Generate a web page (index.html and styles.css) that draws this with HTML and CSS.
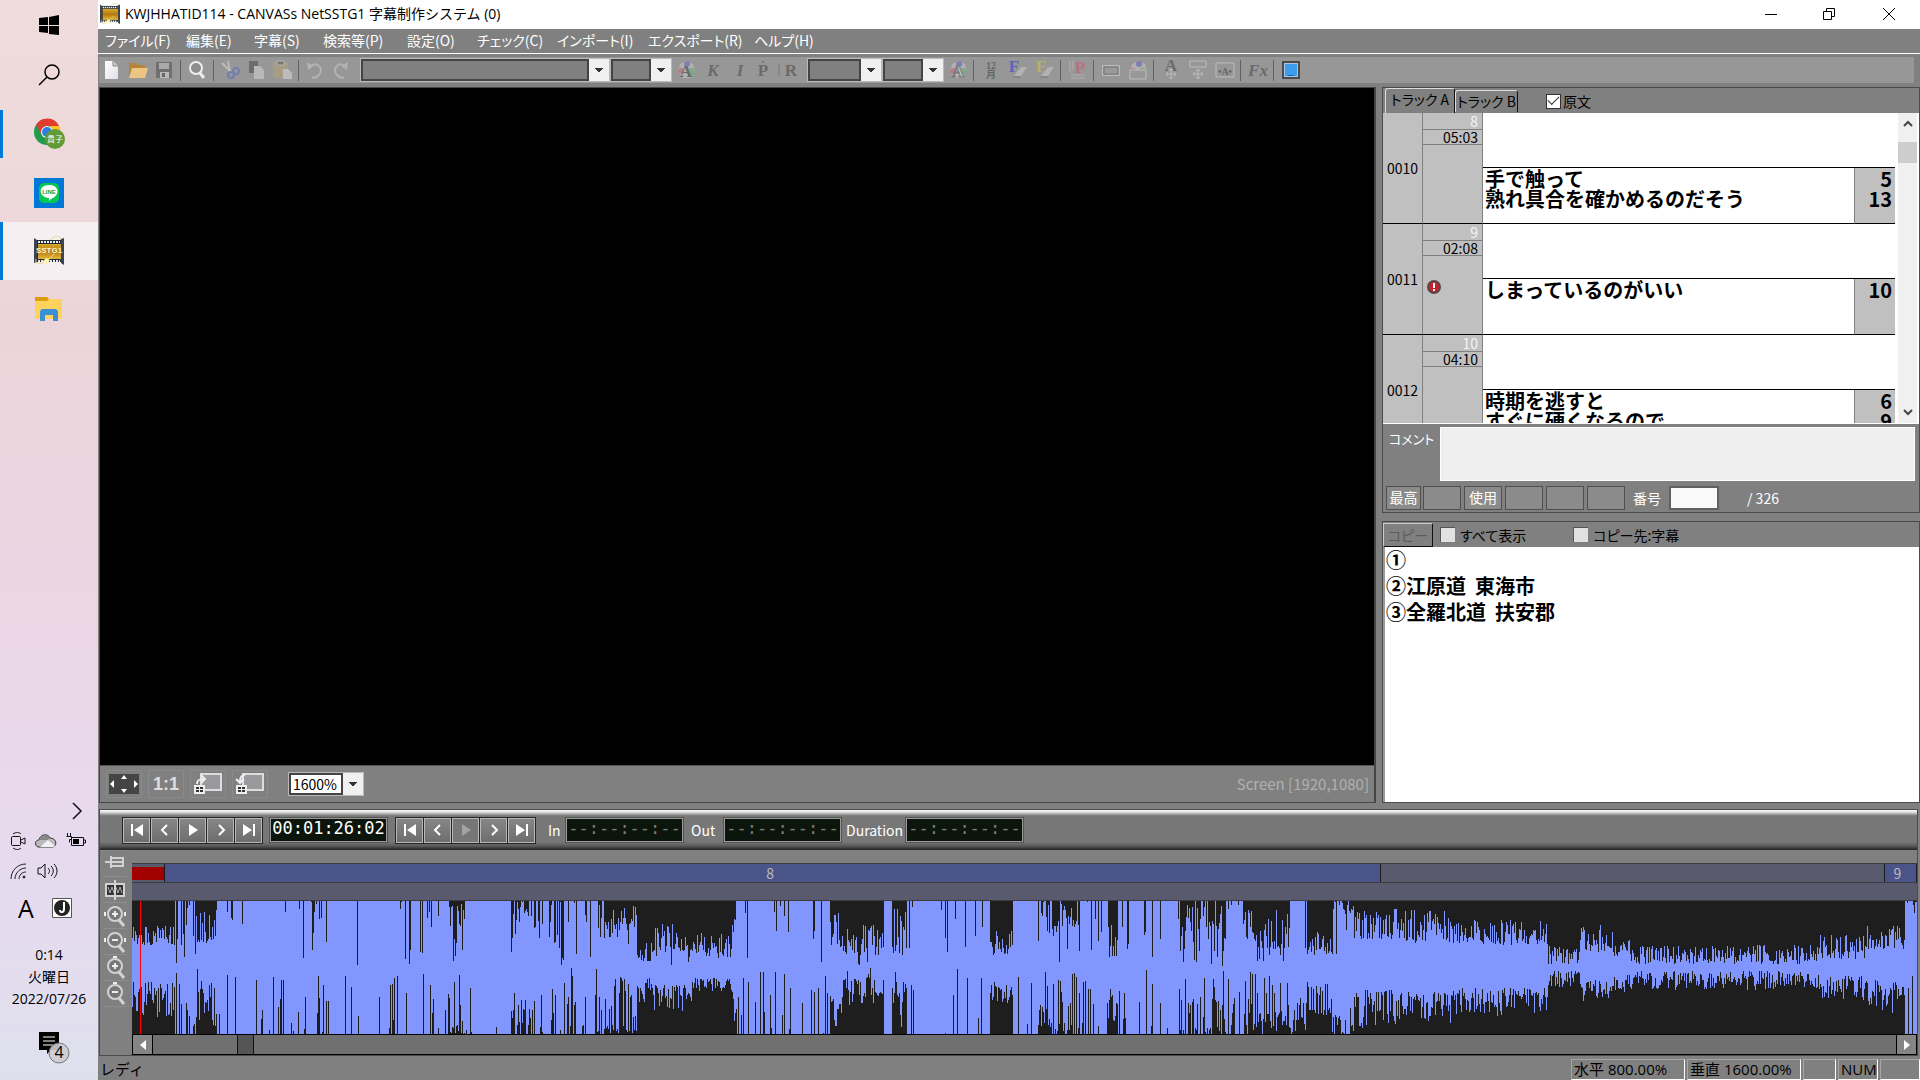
FILE: index.html
```html
<!DOCTYPE html>
<html lang="ja">
<head>
<meta charset="utf-8">
<title>KWJHHATID114 - CANVASs NetSSTG1 字幕制作システム (0)</title>
<link rel="stylesheet" href="styles.css">
</head>
<body>
<svg class="defs" width="0" height="0" aria-hidden="true">
  <defs>
    <linearGradient id="gold" x1="0" y1="0" x2="0" y2="1"><stop offset="0" stop-color="#d9a92b"/><stop offset=".5" stop-color="#b57a10"/><stop offset="1" stop-color="#e6b93c"/></linearGradient>
    <linearGradient id="paper" x1="0" y1="0" x2="1" y2="1"><stop offset="0" stop-color="#fff"/><stop offset="1" stop-color="#dde1e6"/></linearGradient>
    <symbol id="film" viewBox="0 0 30 30">
      <path d="M0 2l3 2v22l-3 1zM27 3l3-1v27l-3-2z" fill="#3b4450"/>
      <path d="M3 4h24v22H3z" fill="#222a35"/>
      <path d="M4 6h22M4 25h22" stroke="#e8edf2" stroke-width="2" stroke-dasharray="2 1"/>
      <path d="M4 8h23v15H4z" fill="url(#gold)"/>
      <path d="M2 23c-2 8 8 4 11 2l7-7M16 4c4-5 12-5 10 0" fill="none" stroke="#ead98c" stroke-width="1"/>
      <path d="M8 26l4-4 4 2-3 4z" fill="#fbf6a8"/>
    </symbol>
    <symbol id="prev" viewBox="0 0 20 20"><path d="M4 4h2v12H4zM16 4v12L7 10z"/></symbol>
    <symbol id="back" viewBox="0 0 20 20"><path d="M12 5l-5 5 5 5" fill="none" stroke="#fff" stroke-width="2"/></symbol>
    <symbol id="play" viewBox="0 0 20 20"><path d="M6 4l9 6-9 6z"/></symbol>
    <symbol id="fwd" viewBox="0 0 20 20"><path d="M8 5l5 5-5 5" fill="none" stroke="#fff" stroke-width="2"/></symbol>
    <symbol id="next" viewBox="0 0 20 20"><path d="M14 4h2v12h-2zM4 4v12l9-6z"/></symbol>
    <symbol id="palette" viewBox="0 0 20 20">
      <path d="M10 1l7 3 2 7-4 7H6l-4-6 2-8z" fill="#b0b0b0"/>
      <circle cx="11" cy="4" r="3" fill="#7b80b0"/><circle cx="15" cy="12" r="4" fill="#7fa88b"/><circle cx="5" cy="11" r="3" fill="#b28089"/>
    </symbol>
    <symbol id="eraser" viewBox="0 0 20 20"><path d="M6 16l7-9h6l-6 9z" fill="#b2b2b2"/><path d="M6 16h7v2H5z" fill="#888"/></symbol>
    <symbol id="move" viewBox="0 0 20 20"><path d="M10 9v10M5 14h10M8 11l2-2 2 2M8 17l2 2 2-2M7 12l-2 2 2 2M13 12l2 2-2 2" fill="none" stroke="#bcbcbc" stroke-width="1"/></symbol>
    <symbol id="lens" viewBox="0 0 24 24"><circle cx="12" cy="10" r="7" fill="#777" stroke="#d2d2d2" stroke-width="2"/><path d="M16 16l5 6" stroke="#d2d2d2" stroke-width="3"/></symbol>
  </defs>
</svg>

<div class="desktop">
  <nav class="taskbar" aria-label="タスクバー">
    <button class="task" aria-label="スタート"><svg width="20" height="20" viewBox="0 0 20 20"><path d="M0 3l9-1v8H0zM10 2l10-2v10H10zM0 11h9v7l-9-1zM10 11h10v9l-10-1z"/></svg></button>
    <button class="task" aria-label="検索"><svg width="22" height="22" viewBox="0 0 22 22" fill="none" stroke="#000" stroke-width="1.500"><circle cx="14" cy="8" r="7"/><path d="M9 13l-8 8"/></svg></button>
    <button class="task running" aria-label="Chrome"><svg width="32" height="32" viewBox="0 0 32 32">
      <circle cx="14" cy="14" r="13" fill="#1f9d4d"/><path d="M3 7a13 13 0 0 1 23 1H14z" fill="#e33b2e"/><path d="M3 7l6 10 5-9z" fill="#e33b2e"/><path d="M26 8a13 13 0 0 1-10 19l5-12-4-7z" fill="#fcc31e"/><circle cx="14" cy="14" r="6" fill="#fff"/><circle cx="14" cy="14" r="5" fill="#2f7de1"/>
      <circle cx="22" cy="21" r="10" fill="#629a35"/><text x="22" y="24" class="badge-text">貴子</text></svg></button>
    <button class="task" aria-label="LINE"><svg width="30" height="30" viewBox="0 0 30 30"><path d="M0 0h30v30H0z" fill="#0078d7"/><rect x="5" y="5" width="20" height="20" rx="5" fill="#06c755"/><path d="M15 7c11 0 11 11 2 14l-2 2v-3C4 19 4 7 15 7z" fill="#fff"/><text x="15" y="16" class="line-text">LINE</text></svg></button>
    <button class="task running active" aria-label="SSTG1"><svg width="30" height="30" viewBox="0 0 30 30"><use href="#film"/><text x="15" y="17" class="sst-text">SSTG1</text></svg></button>
    <button class="task" aria-label="エクスプローラー"><svg width="28" height="24" viewBox="0 0 28 24"><path d="M0 0h12l2 2v4H0z" fill="#dd9c0b"/><path d="M0 4h12l2-2h13v20H0z" fill="#ffd25e"/><path d="M5 24V14l2-2h14l2 2v10h-5v-6h-8v6z" fill="#3b8fd6"/></svg></button>
    <div class="tray">
      <button class="chevron" aria-label="隠れているインジケーター"><svg width="12" height="18" viewBox="0 0 12 18"><path d="M2 1l8 8-8 8" fill="none" stroke="#111" stroke-width="1.500"/></svg></button>
      <div class="tray-row">
        <svg width="16" height="20" viewBox="0 0 16 20" fill="none" stroke="#111"><rect x="1.500" y="5.500" width="9" height="9" rx="1"/><path d="M11 9l4-2v6l-4-2M3 3c3-2 6-2 8 0M3 17c3 2 6 2 8 0"/></svg>
        <svg width="22" height="16" viewBox="0 0 22 16"><path d="M3 14c-4-2-3-7 1-7 1-6 9-7 11-2 6 0 8 7 3 9z" fill="#bbb" stroke="#333"/><path d="M5 14l8-7 7 6-2 1z" fill="#f1f1f1"/><path d="M4 7c2-5 8-6 11-2l-2 2z" fill="#888"/></svg>
        <svg width="21" height="16" viewBox="0 0 21 16"><path d="M5.500 4.500h12v8h-12zM18 7h1.500v3H18" fill="none" stroke="#111"/><path d="M7 6h6v5H7z"/><path d="M1.500 0v3M4.500 0v3M.5 3.500h5v3h-2v3" fill="none" stroke="#111"/></svg>
      </div>
      <div class="tray-row second">
        <svg width="18" height="18" viewBox="0 0 18 18" fill="none" stroke="#222"><path d="M1 17C1 9 7 2 16 2M5 17c0-6 5-11 11-11M9 17c0-4 3-7 7-7"/><circle cx="14" cy="15" r="1" fill="#111"/></svg>
        <svg width="22" height="18" viewBox="0 0 22 18" fill="none" stroke="#111"><path d="M1 6h3l4-4v14l-4-4H1zM11 6c2 2 2 4 0 6M14 4c3 3 3 7 0 10M17 2c4 4 4 10 0 14"/></svg>
      </div>
      <div class="tray-row ime"><span>A</span>
        <svg width="20" height="20" viewBox="0 0 20 20"><path d="M.5.500h19v19H.5z" fill="#fff" stroke="#555"/><circle cx="10" cy="10" r="8" fill="#222"/><path d="M12 4v7c0 4-4 4-4 1" fill="none" stroke="#fff" stroke-width="2"/></svg>
      </div>
      <div class="clock"><span>0:14</span><span>火曜日</span><span>2022/07/26</span></div>
      <button class="notice" aria-label="通知"><svg width="32" height="34" viewBox="0 0 32 34"><path d="M1 1h20v18H13l-4 4v-4H1z"/><path d="M5 6h12M5 10h12M5 14h10" stroke="#fff"/><circle cx="21" cy="22" r="10" fill="#ccccd2" fill-opacity=".9" stroke="#777"/><text x="21" y="27" class="notice-text">4</text></svg></button>
    </div>
  </nav>

  <div class="app">
    <header class="titlebar">
      <svg width="20" height="22" viewBox="0 0 30 30" preserveAspectRatio="none"><use href="#film"/></svg>
      <h1>KWJHHATID114 - CANVASs NetSSTG1 字幕制作システム (0)</h1>
      <div class="window-buttons">
        <button aria-label="最小化"><svg width="14" height="14"><path d="M1 7.500h12" stroke="#000"/></svg></button>
        <button aria-label="元に戻す"><svg width="14" height="14" fill="none" stroke="#000"><path d="M1.500 4.500h8v8h-8zM4.500 4V1.500h8v8H10"/></svg></button>
        <button aria-label="閉じる"><svg width="14" height="14"><path d="M1 1l12 12M13 1L1 13" stroke="#000"/></svg></button>
      </div>
    </header>

    <nav class="menubar">
      <a href="#">ファイル(F)</a><a href="#">編集(E)</a><a href="#">字幕(S)</a><a href="#">検索等(P)</a><a href="#">設定(O)</a><a href="#">チェック(C)</a><a href="#">インポート(I)</a><a href="#">エクスポート(R)</a><a href="#">ヘルプ(H)</a>
    </nav>

    <div class="toolbar">
      <div class="group main-group">
      <button aria-label="新規"><svg width="20" height="20"><path d="M3 1h8l5 5v13H3z" fill="url(#paper)"/><path d="M11 1v5h5" fill="#ccc" stroke="#888"/></svg></button>
      <button aria-label="開く"><svg width="20" height="20"><path d="M1 3h7l2 2h7v12H1z" fill="#b58439"/><path d="M4 8h16l-3 10H1z" fill="#ecc583"/></svg></button>
      <button disabled aria-label="保存"><svg width="20" height="20"><path d="M2 2h16v16H2z" fill="#707070"/><path d="M5 3h10v6H5z" fill="#aaa"/><path d="M6 12h9v6H6z" fill="#b9b9b9"/><path d="M8 13h3v4H8z" fill="#666"/></svg></button>
      <i class="sep"></i>
      <button aria-label="検索"><svg width="20" height="20"><circle cx="9" cy="8" r="6" fill="#8d8d8d" stroke="#eee" stroke-width="2"/><path d="M13 13l4 5" stroke="#eee" stroke-width="3"/></svg></button>
      <i class="sep"></i>
      <button disabled aria-label="切り取り"><svg width="20" height="20" fill="none"><path d="M2 3l10 10M8 1l2 11" stroke="#bbb" stroke-width="2"/><circle cx="11" cy="15" r="3" stroke="#737fae" stroke-width="2"/><circle cx="16" cy="11" r="3" stroke="#737fae" stroke-width="2"/></svg></button>
      <button disabled aria-label="コピー"><svg width="20" height="20"><path d="M3 1h9v12H3z" fill="#6c6c6c"/><path d="M8 6h6l4 4v9H8z" fill="#b8b8b8"/></svg></button>
      <button disabled aria-label="貼り付け"><svg width="20" height="20"><path d="M1 2h15v16H1z" fill="#a79d83"/><path d="M5 1h7v4H5z" fill="#777" stroke="#b5b5b5"/><path d="M11 9h5l4 4v6h-9z" fill="#bcbcbc"/></svg></button>
      <i class="sep"></i>
      <button disabled aria-label="元に戻す"><svg width="20" height="20" fill="none"><path d="M5 6c8-5 14 3 9 9-2 2-4 3-7 3" stroke="#b2b2b2" stroke-width="2"/><path d="M2 2l1 8 6-4z" fill="#b2b2b2"/></svg></button>
      <button disabled aria-label="やり直し"><svg width="20" height="20" fill="none"><path d="M14 6C7 1 1 9 6 15c2 2 4 3 7 3" stroke="#b2b2b2" stroke-width="2"/><path d="M17 2l-1 8-6-4z" fill="#b2b2b2"/></svg></button>
      </div>
      <div class="group">
      <span class="combo dark wide"><select aria-label="フォント"><option></option></select></span>
      <span class="combo dark"><select aria-label="サイズ"><option></option></select></span>
      <button disabled aria-label="文字色"><svg width="20" height="20"><use href="#palette"/><text x="10" y="17" class="ic dark-ic">A</text></svg></button>
      <button disabled aria-label="太字"><svg width="20" height="20"><text x="10" y="16" class="ic dark-ic it">K</text></svg></button>
      <button disabled aria-label="斜体"><svg width="20" height="20"><text x="10" y="16" class="ic dark-ic it">I</text></svg></button>
      <button disabled aria-label="傍点"><svg width="20" height="20"><text x="6" y="16" class="ic dark-ic">P</text><circle cx="6" cy="2" r="1" fill="#6d6d6d"/></svg></button>
      <button disabled aria-label="ルビ"><svg width="20" height="20"><text x="7" y="16" class="ic dark-ic">R</text><path d="M-5 4v12" stroke="#777"/></svg></button>
      <span class="combo dark mid"><select aria-label="位置"><option></option></select></span>
      <span class="combo dark"><select aria-label="揃え"><option></option></select></span>
      <button disabled aria-label="縁色"><svg width="20" height="20"><use href="#palette"/><text x="10" y="17" class="ic light-ic">A</text></svg></button>
      <i class="sep"></i>
      <button disabled aria-label="縦中横"><svg width="20" height="20"><text x="10" y="9" class="tiny">12</text><text x="10" y="18" class="tiny">月</text></svg></button>
      <button disabled aria-label="書式クリア"><svg width="20" height="20"><use href="#eraser"/><text x="6" y="12" class="ic blue-ic">F</text></svg></button>
      <button disabled aria-label="書式削除"><svg width="20" height="20"><use href="#eraser"/><text x="6" y="12" class="ic yellow-ic">F</text></svg></button>
      <i class="sep"></i>
      <button disabled aria-label="段落"><svg width="20" height="20"><path d="M2 1v11M5 1v9M3 15h14M3 18h14" stroke="#b0b0b0"/><text x="12" y="13" class="ic red-ic">P</text></svg></button>
      <i class="sep"></i>
      <button disabled aria-label="枠"><svg width="20" height="20"><path d="M1.500 5.500h17v10h-17z" fill="#999" stroke="#bcbcbc"/><path d="M3 7h14v7H3z" fill="none" stroke="#777"/></svg></button>
      <button disabled aria-label="枠色"><svg width="20" height="20"><use href="#palette"/><path d="M2 10h16v9H2z" fill="#999" stroke="#bcbcbc"/></svg></button>
      <i class="sep"></i>
      <button disabled aria-label="文字移動"><svg width="20" height="20"><text x="10" y="11" class="ic dark-ic">A</text><use href="#move"/></svg></button>
      <button disabled aria-label="枠移動"><svg width="20" height="20"><path d="M2 1h16v6H2z" fill="none" stroke="#bcbcbc"/><use href="#move"/></svg></button>
      <button disabled aria-label="字間"><svg width="20" height="20"><path d="M1 3h18v14H1z" fill="none" stroke="#bcbcbc"/><text x="10" y="15" class="tiny">•A•</text></svg></button>
      <i class="sep"></i>
      <button disabled aria-label="効果"><svg width="20" height="20"><text x="10" y="16" class="ic dark-ic it">Fx</text></svg></button>
      <i class="sep"></i>
      <button aria-label="画面"><svg width="20" height="20"><path d="M2 2h16v16H2z" fill="#3f9cea" stroke="#4a4a4a" stroke-width="2"/><path d="M3.500 3.500h13v13h-13z" fill="none" stroke="#a9c8e8"/><path d="M7 15h6v1H7z" fill="#1765b5"/></svg></button>
      </div>
    </div>

    <main class="workspace">
      <section class="viewer">
        <div class="screen"></div>
        <div class="viewbar">
          <button aria-label="全体表示"><svg width="30" height="22"><path d="M0 1h30v20H0z" fill="#454545"/><path d="M12 6l3-4 3 4zM12 16l3 4 3-4zM5 7v8l-4-4zM25 7v8l4-4z" fill="#fff"/></svg></button>
          <button class="ratio">1:1</button>
          <button aria-label="ズームイン"><svg width="30" height="22"><path d="M8 1h20v16H8z" fill="#9a9a9e" stroke="#ddd" stroke-width="2"/><path d="M1 12h11v9H1z" fill="#eee"/><path d="M3 14h3v2H3zM7 14h3v2H7zM3 17h3v2H3zM7 17h3v2H7z" fill="#333"/><path d="M4 11c0-4 2-5 7-5M8 2l4 4-4 4" fill="none" stroke="#eee" stroke-width="2"/></svg></button>
          <button aria-label="ズームアウト"><svg width="30" height="22"><path d="M8 1h20v16H8z" fill="#9a9a9e" stroke="#ddd" stroke-width="2"/><path d="M1 12h11v9H1z" fill="#eee"/><path d="M3 14h3v2H3zM7 14h3v2H7zM3 17h3v2H3zM7 17h3v2H7z" fill="#333"/><path d="M10 2C6 2 5 5 5 9M1 6l4 4 4-4" fill="none" stroke="#eee" stroke-width="2"/></svg></button>
          <span class="combo zoom"><select aria-label="倍率"><option>1600%</option></select></span>
          <span class="screen-size">Screen [1920,1080]</span>
        </div>
      </section>

      <div class="side">
        <section class="tracks">
          <div class="tabs">
            <button class="tab on">トラック A</button><button class="tab">トラック B</button>
            <label class="check original"><input type="checkbox" checked>原文</label>
          </div>
          <div class="list">
            <table>
              <colgroup><col class="c-no"><col class="c-info"><col><col class="c-count"></colgroup>
              <tbody>
                <tr class="source"><th rowspan="2">0010</th><td rowspan="2" class="info"><div>8</div><div>05:03</div></td><td colspan="2"></td></tr>
                <tr class="caption"><td>手で触って<br>熟れ具合を確かめるのだそう</td><td class="count">5<br>13</td></tr>
                <tr class="source"><th rowspan="2">0011</th><td rowspan="2" class="info"><div>9</div><div>02:08</div><svg width="14" height="14" aria-label="警告"><circle cx="7" cy="7" r="6" fill="#c4232b" stroke="#5c4548" stroke-width="2"/><path d="M7 3v5M7 9v2" stroke="#fff" stroke-width="2"/></svg></td><td colspan="2"></td></tr>
                <tr class="caption"><td>しまっているのがいい</td><td class="count">10</td></tr>
                <tr class="source"><th rowspan="2">0012</th><td rowspan="2" class="info"><div>10</div><div>04:10</div></td><td colspan="2"></td></tr>
                <tr class="caption"><td>時期を逃すと<br>すぐに硬くなるので</td><td class="count">6<br>9</td></tr>
              </tbody>
            </table>
            <div class="scrollbar">
              <button aria-label="上へ"><svg width="10" height="8"><path d="M1 6l4-4 4 4" fill="none" stroke="#444" stroke-width="2"/></svg></button>
              <span class="thumb"></span>
              <button aria-label="下へ"><svg width="10" height="8"><path d="M1 2l4 4 4-4" fill="none" stroke="#444" stroke-width="2"/></svg></button>
            </div>
          </div>
          <div class="comment"><label for="comment">コメント</label><textarea id="comment"></textarea></div>
          <div class="counts">
            <span class="box narrow">最高</span><span class="box"></span><span class="box gap">使用</span><span class="box gap"></span><span class="box gap"></span><span class="box gap"></span>
            <label for="number">番号</label><input id="number" type="text"><span class="total">/ 326</span>
          </div>
        </section>
        <section class="notes">
          <div class="notes-bar">
            <button disabled class="copy">コピー</button>
            <label class="check all"><input type="checkbox">すべて表示</label>
            <label class="check"><input type="checkbox">コピー先:字幕</label>
          </div>
          <div class="notes-text"><p>①</p><p>②江原道  東海市</p><p>③全羅北道  扶安郡</p></div>
        </section>
      </div>
    </main>

    <section class="timeline">
      <div class="transport">
        <div class="keys">
          <button aria-label="先頭"><svg><use href="#prev"/></svg></button><button aria-label="前"><svg><use href="#back"/></svg></button><button aria-label="再生"><svg><use href="#play"/></svg></button><button aria-label="次"><svg><use href="#fwd"/></svg></button><button aria-label="末尾"><svg><use href="#next"/></svg></button>
        </div>
        <output class="led now">00:01:26:02</output>
        <div class="keys">
          <button aria-label="前の字幕"><svg><use href="#prev"/></svg></button><button aria-label="前へ"><svg><use href="#back"/></svg></button><button class="dim" aria-label="字幕再生"><svg><use href="#play"/></svg></button><button aria-label="次へ"><svg><use href="#fwd"/></svg></button><button aria-label="次の字幕"><svg><use href="#next"/></svg></button>
        </div>
        <span class="t-label in">In</span><output class="led">--:--:--:--</output>
        <span class="t-label out">Out</span><output class="led">--:--:--:--</output>
        <span class="t-label dur">Duration</span><output class="led">--:--:--:--</output>
      </div>
      <div class="editor">
        <div class="tools">
          <button aria-label="固定"><svg width="24" height="24"><path d="M2 10h6M8 4v12M9 6h11v8H9M9 10h10" fill="none" stroke="#d2d2d2" stroke-width="2"/></svg></button>
          <button aria-label="中央"><svg width="24" height="24"><path d="M3 6h18v12H3z" fill="#333" stroke="#d2d2d2" stroke-width="2"/><path d="M5 9l2 6 2-6 2 6M13 9l2 6 2-6 2 6" fill="none" stroke="#aaa"/><path d="M12 2v20" stroke="#d2d2d2" stroke-width="2"/></svg></button>
          <button aria-label="横拡大"><svg width="24" height="24"><use href="#lens"/><path d="M12 7v6M9 10h6M2 8v4M22 8v4" stroke="#eee" stroke-width="2"/></svg></button>
          <button aria-label="横縮小"><svg width="24" height="24"><use href="#lens"/><path d="M9 10h6M2 8v4M22 8v4" stroke="#eee" stroke-width="2"/></svg></button>
          <button aria-label="縦拡大"><svg width="24" height="24"><use href="#lens"/><path d="M12 7v6M9 10h6M10 1h4" stroke="#eee" stroke-width="2"/></svg></button>
          <button aria-label="縦縮小"><svg width="24" height="24"><use href="#lens"/><path d="M9 10h6M10 1h4" stroke="#eee" stroke-width="2"/></svg></button>
        </div>
        <div class="lanes">
          <div class="lane a"><span class="played"></span><span class="clip eight">8</span><span class="free"></span><span class="clip nine">9</span></div>
          <div class="lane b"></div>
          <div class="wave"><svg id="wave" viewBox="0 0 1785 133" preserveAspectRatio="none" shape-rendering="crispEdges"><path id="wave-path" fill="#8296ff"/><path d="M8 0h1v133H8z" fill="#f00"/></svg></div>
          <div class="hscroll">
            <button aria-label="左へ"><svg width="10" height="10"><path d="M8 0v10L2 5z" fill="#fff"/></svg></button>
            <span class="hthumb"></span>
            <button aria-label="右へ"><svg width="10" height="10"><path d="M2 0v10l6-5z" fill="#fff"/></svg></button>
          </div>
        </div>
      </div>
    </section>

    <footer class="status">
      <span class="ready">レディ</span><span class="cell w1">水平 800.00%</span><span class="cell w1">垂直 1600.00%</span><span class="cell w2"></span><span class="cell w3">NUM</span><span class="cell w3"></span>
    </footer>
  </div>
</div>
<script src="wave.js"></script>
</body>
</html>
```
FILE: styles.css
```css
* { box-sizing: border-box; }
body {
  margin: 0;
  font: 13px/16px "Noto Sans CJK JP", sans-serif;
  font-feature-settings: "palt";
  color: #000;
}
button, select, input, textarea, output { font: inherit; font-feature-settings: inherit; color: inherit; margin: 0; }
button { border: 0; padding: 0; background: none; display: flex; align-items: center; justify-content: center; }
svg { display: block; flex: none; overflow: visible; }
svg text { font-family: "Liberation Serif", "Noto Sans CJK JP", serif; text-anchor: middle; }
.defs { position: absolute; }
.desktop { display: flex; height: 100vh; min-height: 900px; }

/* Taskbar */
.taskbar {
  width: 98px; flex: none; display: flex; flex-direction: column;
  background: linear-gradient(#efdcdc, #ecd5d9 30%, #ead6e6 60%, #e7daee 80%, #dfe0ee);
  border-bottom: 5px solid #dfdfeb;
}
.task { height: 58px; width: 98px; }
.task:first-child { height: 50px; }
.task:nth-child(2) { height: 50px; }
.task:nth-child(3) { height: 60px; margin-top: 4px; }
.task.running { background: linear-gradient(#0078d7, #0078d7) left center / 3px 48px no-repeat; }
.task.running.active { background: linear-gradient(90deg, #0078d7 3px, #f6eff1 3px); }
.badge-text { font: 8px "Noto Sans CJK JP", sans-serif; fill: #fff; }
.line-text { font: bold 6px "Liberation Sans", sans-serif !important; fill: #06a849; }
.sst-text { font: bold 8px "Liberation Sans", sans-serif !important; fill: #fff3cf; }
.tray { margin-top: auto; display: flex; flex-direction: column; padding-bottom: 3px; }
.chevron { margin-left: 70px; width: 14px; height: 20px; }
.tray-row { display: flex; align-items: center; gap: 9px; padding: 0 0 0 10px; height: 30px; margin-top: 5px; }
.tray-row.second { margin-top: 0; }
.tray-row.ime { margin-top: 2px; height: 40px; gap: 18px; padding-left: 18px; font: 25px/30px "Open Sans", sans-serif; }
.clock { display: flex; flex-direction: column; align-items: center; font: 14px/22px "Open Sans", "Noto Sans CJK JP", sans-serif; margin-top: 16px; }
.notice { height: 48px; margin: 14px 0 0 10px; }
.notice-text { font: 16px "Open Sans", sans-serif !important; }

/* Title, menu */
.app { flex: 1; min-width: 0; display: flex; flex-direction: column; background: #808080; }
.titlebar { display: flex; align-items: center; gap: 5px; height: 29px; background: #fff; padding: 0 0 1px 2px; }
.titlebar h1 { margin: 0; font: 14px/20px "Open Sans", "Noto Sans CJK JP", sans-serif; }
.window-buttons { margin-left: auto; display: flex; }
.window-buttons button { width: 58px; height: 28px; }
.window-buttons button:last-child { width: 62px; }
.menubar {
  display: grid; grid-template-columns: 81px 68px 69px 84px 70px 80px 91px 106px auto; align-items: center; height: 25px;
  padding: 0 0 2px 7px; border-bottom: 1px solid #fff;
}
.menubar a { color: #fff; text-decoration: none; font-size: 14px; white-space: nowrap; }

/* Toolbar */
.toolbar { display: flex; align-items: center; height: 26px; background: #979797; margin: 3px 6px 4px 1px; gap: 6px; }
.group { display: flex; align-items: center; }
.group button { width: 27px; height: 24px; flex: none; }
.main-group button { width: 26px; }
.sep { width: 1px; height: 21px; background: #5f5f5f; margin: 0 3px 0 2px; }
.main-group .sep { margin: 0 3px; }
.ic { font-size: 17px; font-weight: bold; }
.it { font-style: italic; }
.dark-ic { fill: #6a6a6a; }
.light-ic { fill: #c9c9c9; stroke: #777; }
.blue-ic { fill: #5f62b8; }
.yellow-ic { fill: #b4b163; }
.red-ic { fill: #b9707f; }
.tiny { font-size: 10px; font-weight: bold; fill: #666; }
.combo { display: grid; width: 62px; height: 24px; flex: none; border: 1px solid #b9b9b9; }
.combo select { grid-area: 1 / 1; appearance: none; border: 2px solid #444; border-radius: 0; background: #808080; margin-right: 20px; padding: 0 2px; min-width: 0; outline: 0; }
.combo::after {
  content: ""; grid-area: 1 / 1; justify-self: end; width: 20px; pointer-events: none;
  background: linear-gradient(#333, #333) 6px 9px / 8px 1px no-repeat, linear-gradient(#333, #333) 7px 10px / 6px 1px no-repeat, linear-gradient(#333, #333) 8px 11px / 4px 1px no-repeat, linear-gradient(#333, #333) 9px 12px / 2px 1px no-repeat, #f0f0f0;
}
.combo.wide { width: 250px; }
.combo.mid { width: 75px; }
.combo.zoom { width: 76px; margin-left: 14px; }
.combo.zoom select { background: #fff; font-size: 14px; line-height: 16px; }

/* Workspace */
.workspace { flex: 1; min-height: 0; display: flex; gap: 6px; }
.viewer { flex: 1; min-width: 0; display: flex; flex-direction: column; border: solid #454545; border-width: 1px 2px 1px 1px; margin-left: 1px; }
.screen { flex: 1; background: #000; }
.viewbar { height: 37px; display: flex; align-items: center; gap: 6px; padding-left: 6px; border-top: 1px solid #555; }
.viewbar button { width: 36px; height: 28px; border: 1px solid #8a8a8a; }
.viewbar .ratio { font: bold 18px/20px "Liberation Sans", sans-serif; color: #ddd; }
.screen-size { margin-left: auto; padding-right: 5px; font-size: 15px; color: #b0b0b0; }
.side { width: 538px; flex: none; display: flex; flex-direction: column; gap: 8px; min-height: 0; }
.tracks { border: 1px solid #4b4b4b; }
.tabs { display: flex; height: 25px; align-items: flex-start; padding-left: 2px; }
.tab { height: 25px; padding: 0 6px 4px; border: solid #ddd; border-width: 1px 1px 0; border-right-color: #111; border-radius: 3px 3px 0 0; font-size: 14px; width: 70px; white-space: nowrap; }
.tab + .tab { margin-top: 2px; height: 22px; width: 63px; padding: 0 2px 2px; }
.check { display: flex; align-items: center; gap: 5px; white-space: nowrap; font-size: 14px; }
.check input { appearance: none; width: 15px; height: 15px; background: #e1e1e1; border: solid #555; border-width: 1px 0 0 1px; }
.check.original { margin: 5px 0 0 28px; gap: 2px; }
.check.original input { background: #fff; border: 1px solid #333; display: grid; place-items: center; }
.check.original input::after { content: ""; width: 10px; height: 5px; border: solid #333; border-width: 0 0 1px 1px; transform: translateY(-2px) rotate(-45deg); }
.list { display: flex; height: 311px; overflow: hidden; background: #fff; border-bottom: 1px solid #fff; }
.list table { flex: 1; border-collapse: separate; border-spacing: 0; table-layout: fixed; width: 512px; height: 333px; }
.c-no { width: 40px; }
.c-info { width: 60px; }
.c-count { width: 41px; }
.list th, .list td { padding: 0; vertical-align: top; border-bottom: 1px solid #000; }
.list th { background: #c0c0c0; font-weight: normal; vertical-align: middle; border-right: 1px solid #808080; font-size: 14px; }
.list .info { background: #c0c0c0; border-right: 1px solid #808080; text-align: right; font-size: 14px; }
.info div { height: 15px; line-height: 14px; border-bottom: 1px solid #808080; padding-right: 4px; }
.info div:first-child { height: 17px; line-height: 17px; color: #f4f4f4; }
.info svg { margin: 24px 0 0 4px; }
.source { height: 55px; }
.caption { height: 56px; }
.list .caption td { font-size: 20px; line-height: 20px; font-weight: bold; padding: 1px 0 0 2px; font-feature-settings: normal; white-space: nowrap; }
.list .caption .count { background: #c0c0c0; border-left: 1px solid #808080; text-align: right; padding: 1px 3px 0 0; }
.scrollbar { width: 24px; border: solid #fff; border-width: 0 2px 0 3px; background: #f0f0f0; display: flex; flex-direction: column; align-items: center; }
.scrollbar button { height: 22px; width: 19px; }
.scrollbar button:last-child { margin-top: auto; }
.thumb { width: 19px; height: 21px; background: #cdcdcd; margin-top: 7px; }
.comment { display: flex; height: 59px; padding: 3px 4px 2px 0; color: #fff; }
.comment label { width: 57px; padding: 4px 0 0 6px; }
.comment textarea { flex: 1; resize: none; border: 1px solid #fff; border-radius: 0; background: #efefef; outline: 0; }
.counts { display: flex; align-items: center; height: 29px; padding-left: 3px; color: #fff; font-size: 14px; }
.box { width: 38px; height: 24px; border: 1px solid #505050; background: #8b8b8b; text-align: center; line-height: 20px; margin-left: 2px; }
.box.narrow { width: 35px; margin-left: 0; }
.box.gap { margin-left: 3px; }
.counts label { margin: 0 8px; }
.counts input { width: 50px; height: 24px; border: 2px solid #606060; background: #fafafa; outline: 0; padding: 0 2px; }
.total { margin-left: 28px; }
.notes { flex: 1; display: flex; flex-direction: column; border: 1px solid #4b4b4b; }
.notes-bar { display: flex; align-items: center; height: 25px; }
.copy { width: 50px; height: 24px; border: 1px solid; border-color: #ccc #111 #111 #ccc; color: #5c5c5c; font-size: 14px; }
.check.all { margin: 0 47px 0 7px; }
.notes-text { flex: 1; background: #fff; border-left: 2px solid #999; padding: 0 1px; font-size: 20px; line-height: 26px; font-weight: bold; font-feature-settings: normal; white-space: pre; }
.notes-text p { margin: 0; }

/* Timeline */
.timeline { flex: none; margin: 6px 2px 0 1px; border: 1px solid #4b4b4b; }
.transport {
  display: flex; align-items: center; height: 40px; padding-left: 22px;
  background: linear-gradient(#fff, #ccc 3px, #888 5px, #777 6px, #777 32px, #5a5a5a 36px, #222 40px);
}
.keys { display: flex; gap: 1px; background: #252525; padding: 1px; }
.keys button { width: 27px; height: 25px; border: 1px solid #b7b7b7; background: linear-gradient(#868686, #6e6e6e); fill: #fff; }
.keys svg { width: 20px; height: 20px; }
.keys .dim { fill: #a3a3a3; background: #777; }
.led { width: 119px; height: 26px; border: 1px solid #555; outline: 1px solid #999; outline-offset: -2px; background: #0b150b; color: #7c7c72; font: 17px/21px "DejaVu Sans Mono", monospace; text-align: center; }
.led.now { margin: 0 7px 0 6px; color: #fff; }
.t-label { color: #fff; font-size: 14px; }
.t-label.in { width: 29px; padding-left: 12px; }
.t-label.out { width: 39px; padding-left: 7px; }
.t-label.dur { width: 63px; padding-left: 4px; }
.editor { display: flex; }
.tools { width: 32px; padding: 0 4px 0 3px; border-top: 1px solid #888; }
.tools button { width: 24px; height: 26px; border-bottom: 1px solid #8e8e8e; }
.lanes { flex: 1; min-width: 0; padding-top: 13px; }
.lane { height: 19px; display: flex; background: #5a5a6e; border-top: 1px solid #3c3c3c; }
.lane.b { border-bottom: 1px solid #3c3c3c; }
.played { width: 32px; background: #a00000; margin: 3px 0 2px; }
.clip { background: #4b5488; border: solid #1c1c1c; border-width: 0 1px; color: #bbb; text-align: center; font-size: 14px; line-height: 18px; }
.eight { flex: 1215; padding-right: 5px; }
.free { flex: 505; }
.nine { width: 33px; padding-right: 6px; }
.wave { height: 133px; background: #1e1e1e; }
.wave svg { width: 100%; height: 100%; overflow: hidden; }
.hscroll { height: 21px; display: flex; background: #707070; border: 1px solid #000; }
.hscroll button { width: 20px; background: #858585; border: solid #000; border-width: 0 1px 0 0; }
.hscroll button:last-child { margin-left: auto; border-width: 0 0 0 1px; }
.hthumb { width: 17px; background: #555; border: solid #111; border-width: 0 1px; margin-left: 84px; }

/* Status bar */
.status { display: flex; height: 24px; padding-top: 3px; gap: 2px; font: 15px/20px "Open Sans", "Noto Sans CJK JP", sans-serif; white-space: nowrap; }
.ready { flex: 1; padding-left: 2px; }
.cell { border: 1px solid #a5a5a5; border-right-color: #fff; border-bottom-color: #fff; padding-left: 2px; line-height: 18px; }
.w1 { width: 114px; }
.w2 { width: 33px; }
.w3 { width: 40px; }
```
FILE: wave.js
```js
// Loudness envelope: [end, topLow, topHigh, bottomLow, bottomHigh, topDropRate, bottomDropRate]
// Levels run 0..67; columns at 67 are clipped, and a drop pulls one column down.
const envelope = [
  [43, 22, 42, 12, 50, 0, 0], [64, 67, 67, 67, 67, .4, .3], [85, 24, 58, 20, 60, 0, .1],
  [178, 67, 67, 67, 67, .07, .13], [192, 67, 67, 67, 67, .4, .3], [273, 67, 67, 67, 67, .08, .16],
  [298, 67, 67, 67, 67, .3, .1], [318, 67, 67, 67, 67, .15, .4], [333, 40, 67, 60, 67, .3, .4],
  [378, 67, 67, 67, 67, .03, .06], [401, 45, 80, 40, 75, .1, .2], [472, 67, 67, 67, 67, .4, .42],
  [506, 28, 62, 60, 67, .1, .5], [520, 6, 26, 10, 36, 0, 0], [560, 14, 44, 16, 45, .05, 0],
  [600, 8, 34, 10, 24, 0, 0], [604, 30, 67, 20, 55, 0, 0], [698, 67, 67, 67, 67, .12, .28],
  [710, 20, 67, 30, 67, .1, .1], [752, 12, 42, 10, 38, .05, .1], [760, 67, 67, 67, 67, 0, .1],
  [775, 12, 60, 20, 67, .1, .1], [858, 67, 67, 67, 67, .08, .06], [881, 12, 40, 14, 36, 0, 0],
  [905, 67, 67, 67, 67, .05, .1], [951, 40, 80, 55, 75, .25, .4], [976, 67, 67, 67, 67, .12, .3],
  [986, 10, 44, 20, 55, 0, 0], [1046, 67, 67, 67, 67, .12, .16], [1094, 40, 75, 60, 75, .3, .45],
  [1111, 67, 67, 67, 67, .15, .3], [1158, 18, 58, 45, 75, .12, .35], [1175, 67, 67, 35, 67, .12, .1],
  [1200, 10, 38, 14, 50, 0, 0], [1222, 50, 75, 45, 75, .1, .1], [1262, 28, 58, 22, 60, 0, 0],
  [1320, 24, 60, 24, 56, 0, 0], [1416, 22, 48, 20, 48, 0, 0], [1448, 3, 22, 3, 20, 0, 0],
  [1482, 15, 42, 12, 34, 0, 0], [1498, 8, 28, 6, 24, 0, 0], [1688, 3, 22, 3, 22, 0, 0],
  [1733, 8, 32, 8, 32, 0, 0], [1773, 18, 42, 12, 48, 0, 0], [1785, 60, 80, 67, 67, .1, .1]
];
let seed = 20220726;
const rand = () => (seed = (seed * 1103515245 + 12345) % 2147483648) / 2147483648;
const level = (low, high, drop) =>
  Math.round(rand() < drop ? rand() * low : low + (high - low) * Math.pow(rand(), 1.25));
let x = 0;
let d = "";
for (const [end, tl, th, bl, bh, td, bd] of envelope) {
  for (; x < end; x++) {
    const top = Math.min(66, level(tl, th, td));
    const bottom = Math.min(66, level(bl, bh, bd));
    d += `M${x} ${66 - top}h1V${67 + bottom}h-1z`;
  }
}
document.getElementById("wave-path").setAttribute("d", d);
```
